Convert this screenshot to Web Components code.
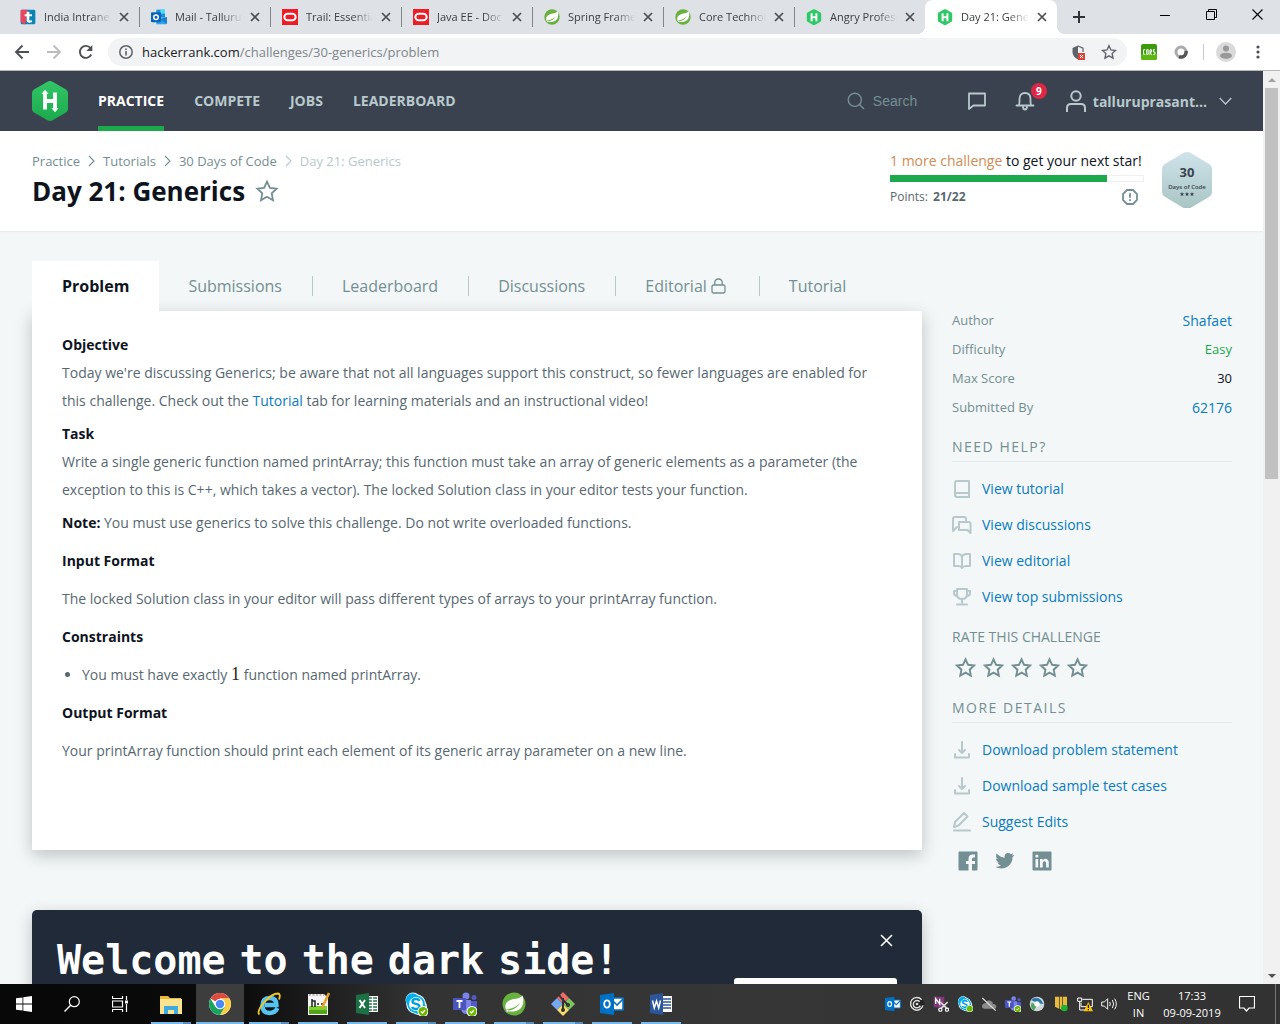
<!DOCTYPE html>
<html lang="en">
<head>
<meta charset="utf-8">
<title>Day 21: Generics | HackerRank</title>
<style>
html,body{margin:0;height:100%}
body{display:flex;flex-direction:column;height:100vh;overflow:hidden;font-family:"Open Sans",sans-serif;font-size:14px;color:#0e141e}
.viewport{flex:1;min-height:0;display:flex}
</style>
</head>
<body>
<tab-strip>
  <browser-tab icon="t">India Intrane</browser-tab>
  <browser-tab icon="mail">Mail - Talluru</browser-tab>
  <browser-tab icon="oracle">Trail: Essentia</browser-tab>
  <browser-tab icon="oracle">Java EE - Doc</browser-tab>
  <browser-tab icon="spring">Spring Frame</browser-tab>
  <browser-tab icon="spring">Core Technol</browser-tab>
  <browser-tab icon="hr" last>Angry Profess</browser-tab>
  <browser-tab icon="hr" active>Day 21: Gener</browser-tab>
</tab-strip>
<browser-toolbar></browser-toolbar>
<div class="viewport">
  <challenge-page></challenge-page>
  <scroll-bar></scroll-bar>
</div>
<task-bar></task-bar>

<script>
function define(name, css, html){
  const tpl = document.createElement('template');
  tpl.innerHTML = '<style>:host,*{box-sizing:border-box}button{font:inherit;color:inherit;background:none;border:0;padding:0;margin:0}a{text-decoration:none}svg{display:block;flex:none}' + css + '</style>' + (typeof html === 'string' ? html : '');
  customElements.define(name, class extends HTMLElement{
    constructor(){
      super();
      this.attachShadow({mode:'open'}).appendChild(tpl.content.cloneNode(true));
    }
    connectedCallback(){
      if(typeof html === 'function' && !this.ready){
        this.ready = true;
        const t = document.createElement('template');
        t.innerHTML = html(this);
        this.shadowRoot.appendChild(t.content.cloneNode(true));
      }
    }
  });
}

const STAR = 'M12 2.6l2.9 6.3 6.8.8-5 4.7 1.3 6.8-6-3.4-6 3.4 1.3-6.8-5-4.7 6.8-.8z';
const HEX = 'M18 0q1.500 0 3 .9l13 7.600q2 1.200 2 3.500v16q0 2.300-2 3.500l-13 7.600q-3 1.800-6 0l-13-7.600q-2-1.200-2-3.500v-16q0-2.300 2-3.500l13-7.600q1.500-.9 3-.9z';
const SPRING = '<circle cx="12" cy="12" r="11.500" fill="#68b13e"/><path d="M20.500 3.500c2 6 .5 12-4 14.500-4 2-8 1.600-11.500 1 6.500-1 11-4 13-8-3 3.500-7.500 5.800-14 6.500-2-4 .5-8.500 5-9.800 4.500-1.200 8.500-.7 11.500-4.200z" fill="#fff"/><circle cx="5.400" cy="18.800" r="1" fill="#fff"/>';
const CHROME = '<circle cx="12" cy="12" r="11" fill="#fff"/><path d="M12 12L2.500 6.500A11 11 0 0 1 21.500 6.500H12z" fill="#dd4b3e"/><path d="M21.500 6.500A11 11 0 0 1 12 23l4.800-8.300L12 6.500z" fill="#fdcd45"/><path d="M2.500 6.500l4.800 8.300 4.700 2.200 4.800-2.300L12 23A11 11 0 0 1 2.500 6.500z" fill="#1aa25f"/><circle cx="12" cy="12" r="5.200" fill="#fff"/><circle cx="12" cy="12" r="4.200" fill="#4a8af4"/>';
const FAV = {
  t:'<rect x="1" y="1" width="22" height="22" rx="2" fill="#0b84b5"/><path d="M2 1h9L8 23H6L1 19V2z" fill="#f0435c"/><path d="M10 4h4v4h4v3h-4v5q0 2 4 1v3q-8 2-8-3v-6H7V8h3z" fill="#fff"/>',
  mail:'<path d="M8 1h13v12H8z" fill="#1490df"/><path d="M14 1h7v6h-7z" fill="#50d9ff"/><path d="M8 12l8 5 8-5v9q0 2-2 2H8z" fill="#28a8ea"/><path d="M24 12v10L12 15z" fill="#1b7fd0"/><rect y="5" width="15" height="15" rx="1.500" fill="#0a64b8"/><circle cx="7.500" cy="12.500" r="3.400" fill="none" stroke="#fff" stroke-width="2.200"/>',
  oracle:'<path d="M0 0h24v24H0z" fill="#ee1c25"/><rect x="3.500" y="7" width="17" height="10" rx="5" fill="none" stroke="#fff" stroke-width="3"/>',
  spring:SPRING,
  hr:'<g transform="translate(1.200 .2) scale(.6)"><path d="'+HEX+'" fill="#2ec866"/><path d="M12 10v20M24 10v20M12 20h12" stroke="#fff" stroke-width="5"/></g>'
};
const svg = (s, body, vb='0 0 24 24', h=s) => `<svg width="${s}" height="${h}" viewBox="${vb}" fill="none" aria-hidden="true">${body}</svg>`;
const CROSS = c => svg(10, `<path d="M1 1l8 8M9 1l-8 8" stroke="${c}" stroke-width="1.700"/>`, '0 0 10 10');

define('browser-tab', `
:host{display:flex;flex:0 1 131px;min-width:0;height:34px;padding:0 10px 0 12px;align-items:center;gap:8px;position:relative;color:#3c4043;font-size:11px}
:host(:not([active]):not([last]))::after{content:"";position:absolute;right:-1px;top:7px;height:20px;width:1px;background:#80868b}
:host([active]){background:#fff;border-radius:8px 8px 0 0;flex-basis:132px}
:host([active])::before,:host([active])::after{content:"";position:absolute;bottom:0;width:8px;height:8px}
:host([active])::before{left:-8px;background:radial-gradient(circle at 0 0,#dee1e6 8px,#fff 8px)}
:host([active])::after{right:-8px;background:radial-gradient(circle at 100% 0,#dee1e6 8px,#fff 8px)}
.t{flex:1;min-width:0;white-space:nowrap;overflow:hidden;line-height:20px;-webkit-mask-image:linear-gradient(90deg,#000 70%,transparent);mask-image:linear-gradient(90deg,#000 70%,transparent)}
`, el => svg(16, FAV[el.getAttribute('icon')]) + '<span class="t"><slot></slot></span><button aria-label="Close tab">' + CROSS('#4a4d51') + '</button>');

define('tab-strip', `
:host{display:flex;flex:none;height:34px;background:#dee1e6;padding-left:8px;align-items:stretch}
.new{width:44px;display:flex;align-items:center;justify-content:center}
.win{margin-left:auto;display:flex;height:29px}
.win button{width:46px;display:flex;align-items:center;justify-content:center}
`, `<slot></slot><button class="new" aria-label="New tab">${svg(12,'<path d="M6 0v12M0 6h12" stroke="#303236" stroke-width="2"/>','0 0 12 12')}</button>
<div class="win"><button aria-label="Minimize">${svg(10,'<path d="M0 5.500h10" stroke="#000"/>','0 0 10 10')}</button><button aria-label="Restore">${svg(11,'<path d="M.5 2.500h8v8h-8zM2.500 2.500v-2h8v8h-2" stroke="#000"/>','0 0 11 11')}</button><button aria-label="Close">${svg(11,'<path d="M.5.5l10 10M10.500.5l-10 10" stroke="#000" stroke-width="1.100"/>','0 0 11 11')}</button></div>`);

define('browser-toolbar', `
:host{display:flex;flex:none;height:37px;padding:0 6px 0 6px;background:#fff;border-bottom:1px solid #b6b6b6;align-items:center}
.b{width:32px;height:28px;display:flex;align-items:center;justify-content:center}
.omni{flex:1;min-width:0;height:28px;margin:0 6px 0 6px;border-radius:14px;background:#f1f3f4;display:flex;align-items:center;padding:0 10px}
.url{flex:1;margin-left:8px;font-size:13px;line-height:20px;color:#80868b;white-space:nowrap}
.url b{font-weight:400;color:#202124}
.omni button{width:16px;margin-left:15px}
.sep{width:1px;height:16px;background:#c8cacd;margin:0 6px}
`, `<button class="b" aria-label="Back">${svg(16,'<path d="M15 8H2M8.500 1.500L2 8l6.500 6.500" stroke="#4d5156" stroke-width="1.900"/>','0 0 16 16')}</button>
<button class="b" aria-label="Forward">${svg(16,'<path d="M1 8h13M7.500 1.500L14 8l-6.500 6.500" stroke="#babcbe" stroke-width="1.900"/>','0 0 16 16')}</button>
<button class="b" aria-label="Reload">${svg(16,'<path d="M13.300 10.500A6 6 0 1 1 12.500 4" stroke="#4d5156" stroke-width="1.900"/><path d="M14.300 1v6h-6z" fill="#4d5156"/>','0 0 16 16')}</button>
<div class="omni">${svg(16,'<circle cx="8" cy="8" r="6.200" stroke="#5f6368" stroke-width="1.500"/><path d="M8 7v4.500M8 4.500v1.500" stroke="#5f6368" stroke-width="1.600"/>','0 0 16 16')}
<span class="url"><b>hackerrank.com</b>/challenges/30-generics/problem</span>
<button aria-label="Blocked content">${svg(16,'<path d="M8 1.500L2.500 4v4q0 5 5.500 7.500z" fill="#5f6368"/><path d="M8 2l5 2.200V8" stroke="#5f6368" stroke-width="1.200"/><path d="M8 9h7v7H8z" fill="#db4437"/><path d="M10 11l3 3M13 11l-3 3" stroke="#fff"/>','0 0 16 16')}</button>
<button aria-label="Bookmark">${svg(16,`<path d="${STAR}" stroke="#5f6368" stroke-width="2.100"/>`)}</button></div>
<button class="b" aria-label="CORS">${svg(16,'<rect width="16" height="16" rx="2" fill="#3a9a0c"/><path d="M0 10h16v4q0 2-2 2H2q-2 0-2-2z" fill="#5cb811"/><path d="M4.200 5.700H2.600v4.600h1.600M5.700 5.700h1.500v4.600H5.700zM9 10.800V5.700h1.500v2.400H9l1.700 2.700M14 5.700h-1.600V8H14v2.300h-1.800" stroke="#fff"/>','0 0 16 16')}</button>
<button class="b" aria-label="Extension">${svg(14,'<circle cx="7" cy="7" r="5" stroke="#aaa" stroke-width="3"/><path d="M12 6A5 5 0 0 1 5 11.600" stroke="#555" stroke-width="3.400"/>','0 0 14 14')}</button>
<span class="sep"></span>
<button class="b" aria-label="Profile">${svg(20,'<circle cx="10" cy="10" r="10" fill="#dadada"/><circle cx="10" cy="6.500" r="3" fill="#999"/><ellipse cx="10" cy="13.700" rx="6" ry="3" fill="#999"/>','0 0 20 20')}</button>
<button class="b" aria-label="Menu">${svg(4,'<circle cx="2" cy="2" r="1.600" fill="#4d5156"/><circle cx="2" cy="7" r="1.600" fill="#4d5156"/><circle cx="2" cy="12" r="1.600" fill="#4d5156"/>','0 0 4 14',14)}</button>`);

define('scroll-bar', `
:host{display:flex;flex-direction:column;flex:none;width:17px;background:#f1f1f1;align-items:stretch}
button{height:17px;display:flex;align-items:center;justify-content:center}
.track{flex:1;padding:0 2px}
.thumb{height:44.5%;background:#c1c1c1}
`, `<button aria-label="Scroll up">${svg(8,'<path d="M0 4l4-4 4 4z" fill="#a3a3a3"/>','0 0 8 4',4)}</button><div class="track"><div class="thumb"></div></div><button aria-label="Scroll down">${svg(8,'<path d="M0 0l4 4 4-4z" fill="#505050"/>','0 0 8 4',4)}</button>`);

define('site-nav', `
:host{display:flex;height:60px;background:#3b424f;padding:0 31px 0 32px;align-items:center;color:#b7c9cc;font-weight:700;font-size:14px}
nav{display:flex;gap:30px;margin-left:30px;height:60px}
nav a{color:#b7c9cc;line-height:60px;height:60px}
nav a.on{color:#fff;border-bottom:5px solid #1ba94c}
.search{margin-left:auto;display:flex;align-items:center;gap:8px}
input{width:84px;background:none;border:0;outline:0;padding:0;font:14px/20px "Liberation Sans",sans-serif;color:#fff}
input::placeholder{color:#738f93;opacity:1}
.i{width:20px;height:24px;display:flex;align-items:center;justify-content:center;position:relative;margin-left:10px}
.bell{margin-left:28px}
.n{position:absolute;left:16px;top:-6px;width:16px;height:16px;border-radius:8px;background:#dc2844;color:#fff;font-size:10px;line-height:16px;text-align:center}
.user{display:flex;align-items:center;margin-left:30px;gap:6px}
.user svg:last-child{margin-left:6px}
`, `<a href="#" aria-label="HackerRank">${svg(36,`<defs><linearGradient id="g" x1="0" y1="0" x2="0" y2="1"><stop stop-color="#32c766"/><stop offset="1" stop-color="#1ba94c"/></linearGradient></defs><path d="${HEX}" fill="url(#g)"/><path d="M13 12v16.500M23 11.500V28M13 20h10" stroke="#fff" stroke-width="3.800"/><path d="M9.500 12.700l3.500-4 3.500 4zM19.500 27.300l3.500 4 3.500-4z" fill="#fff"/>`,'0 0 36 40',40)}</a>
<nav><a href="#" class="on">PRACTICE</a><a href="#">COMPETE</a><a href="#">JOBS</a><a href="#">LEADERBOARD</a></nav>
<label class="search">${svg(18,'<circle cx="7.800" cy="7.800" r="6.600" stroke="#738f93" stroke-width="1.400"/><path d="M12.500 12.500l4.500 4.500" stroke="#738f93" stroke-width="1.400"/>','0 0 18 18')}<input type="search" placeholder="Search" aria-label="Search"></label>
<button class="i" aria-label="Messages">${svg(18,'<path d="M1 1.500h16v12H5.500L1 17z" stroke="#b7c9cc" stroke-width="1.800" stroke-linejoin="round"/>','0 0 18 18')}</button>
<button class="i bell" aria-label="Notifications">${svg(20,'<path d="M1.500 14.500h17M3.500 14.500q1-1 1-4V8q0-6 5.500-6t5.500 6v2.500q0 3 1 4M8 15.500q0 3 2 3t2-3" stroke="#b7c9cc" stroke-width="1.800" stroke-linecap="round"/>','0 0 20 20')}<span class="n">9</span></button>
<button class="user">${svg(22,'<circle cx="11" cy="6" r="4.700" stroke="#b7c9cc" stroke-width="2"/><path d="M2 22v-4q0-4 4-4h10q4 0 4 4v4" stroke="#b7c9cc" stroke-width="2"/>','0 0 22 23',23)}<span>talluruprasant...</span>${svg(13,'<path d="M.7 1l5.800 6 5.800-6" stroke="#b7c9cc" stroke-width="1.300"/>','0 0 13 8',8)}</button>`);

const CHEV = c => svg(7, `<path d="M1 1l5 5-5 5" stroke="${c}" stroke-width="1.100"/>`, '0 0 7 12', 12);
define('challenge-header', `
:host{display:flex;height:100px;background:#fff;padding:0 51px 0 32px;justify-content:space-between;box-shadow:0 1px 2px rgba(0,0,0,.06)}
.crumbs{display:flex;align-items:center;gap:8px;margin-top:20px;font-size:13px;line-height:20px}
.crumbs a{color:#738f93}.crumbs span{color:#b7c9cc}
.title{display:flex;align-items:center;gap:10px}
h1{margin:0;font-size:26px;line-height:40px;font-weight:700}
.prog{display:flex;gap:18px}
.box{width:254px;padding-top:20px}
.box p{margin:0;line-height:20px;white-space:nowrap}
.box p i{font-style:normal;color:#d08c54}
.bar{height:7px;border:1px solid #f0f0f0;margin:4px 0 5px;display:flex}
.bar div{width:86%;background:#1ba94c;margin:-1px}
.pts{display:flex;align-items:center;justify-content:space-between;font-size:12px;line-height:20px;color:#576871;padding-right:6px}
.pts b{margin-left:2px;font-weight:700}
.badge{margin-top:21px}
`, `<div><div class="crumbs"><a href="#">Practice</a>${CHEV('#738f93')}<a href="#">Tutorials</a>${CHEV('#738f93')}<a href="#">30 Days of Code</a>${CHEV('#b7c9cc')}<span>Day 21: Generics</span></div>
<div class="title"><h1>Day 21: Generics</h1><button aria-label="Bookmark challenge">${svg(24,`<path d="${STAR}" stroke="#738f93" stroke-width="1.800"/>`)}</button></div></div>
<div class="prog"><div class="box"><p><i>1 more challenge</i> to get your next star!</p><div class="bar"><div></div></div>
<div class="pts"><span>Points: <b>21/22</b></span>${svg(16,'<path d="M5 1h6l4 4v6l-4 4H5l-4-4V5z" stroke="#738f93" stroke-width="1.800"/><path d="M8 4.300v4.400M8 10.200v1.700" stroke="#738f93" stroke-width="1.800"/>','0 0 16 16')}</div></div>
<svg class="badge" width="50" height="56" viewBox="0 0 50 56"><defs><linearGradient id="b" x1="0" y1="0" x2="0" y2="1"><stop stop-color="#cfe3eb"/><stop offset="1" stop-color="#a9c5c3"/></linearGradient></defs><path transform="scale(1.389 1.420)" d="${HEX}" fill="url(#b)"/><text x="25" y="25" text-anchor="middle" font-size="13" font-weight="700" fill="#39424e">30</text><text x="25" y="37" text-anchor="middle" font-size="6" font-weight="600" fill="#39424e">Days of Code</text><g fill="#39424e"><path id="s" d="M20 40l.7 1.400 1.500.1-1.200 1 .4 1.500-1.400-.8-1.400.8.4-1.500-1.200-1 1.500-.1z"/><use href="#s" x="5"/><use href="#s" x="10"/></g></svg></div>`);

define('challenge-tabs', `
:host{display:flex;height:50px;align-items:center;font-size:16px}
a{color:#738f93;line-height:20px;padding:0 30px 0 29px;display:flex;align-items:center;gap:4px;border-right:1px solid #b7c9cc;white-space:nowrap}
a svg{margin-right:3px}
a:last-child,a.on{border:0}
a.on{background:#fff;color:#0e141e;font-weight:700;line-height:50px;padding:0 30px;position:relative}
`, `<a href="#" class="on">Problem</a><a href="#">Submissions</a><a href="#">Leaderboard</a><a href="#">Discussions</a><a href="#">Editorial${svg(15,'<rect x="1" y="7" width="13" height="8" rx="1.500" stroke="#738f93" stroke-width="1.300"/><path d="M3.800 7V4.500q0-3.500 3.700-3.500t3.700 3.500V7" stroke="#738f93" stroke-width="1.300"/>','0 0 15 16',16)}</a><a href="#">Tutorial</a>`);

define('problem-card', `
:host{display:block;background:#fff;padding:20px 30px 85px;box-shadow:0 5px 16px rgba(0,0,0,.22);line-height:28px;color:#576871}
p{margin:0}
p+p{margin-top:5px}
h3{font-size:14px;line-height:28px;margin:10px 0;font-weight:700;color:#0e141e}
b{font-weight:700;color:#0e141e}
a{color:#097bbf}
ul{margin:0;padding-left:20px}
.m{font:18px/20px "Liberation Serif",serif;color:#222}
`, `<p><b>Objective</b><br>Today we're discussing Generics; be aware that not all languages support this construct, so fewer languages are enabled for this challenge. Check out the <a href="#">Tutorial</a> tab for learning materials and an instructional video!</p>
<p><b>Task</b><br>Write a single generic function named printArray; this function must take an array of generic elements as a parameter (the exception to this is C++, which takes a vector). The locked Solution class in your editor tests your function.</p>
<p><b>Note:</b> You must use generics to solve this challenge. Do not write overloaded functions.</p>
<h3>Input Format</h3><p>The locked Solution class in your editor will pass different types of arrays to your printArray function.</p>
<h3>Constraints</h3><ul><li>You must have exactly <span class="m">1</span> function named printArray.</li></ul>
<h3>Output Format</h3><p>Your printArray function should print each element of its generic array parameter on a new line.</p>`);

define('dark-banner', `
:host{display:flex;margin-top:60px;height:220px;background:#202a38;border-radius:5px;padding:20px 25px 0;justify-content:space-between;color:#fff;box-shadow:0 5px 16px rgba(0,0,0,.22)}
h2{margin:0;font:700 40px/60px "DejaVu Sans Mono",monospace;white-space:nowrap}
h2 span{font-family:"DejaVu Sans",sans-serif}
.r{display:flex;flex-direction:column;align-items:flex-end;width:163px}
.r button{margin:4px 4px 0 0}
.cta{align-self:stretch;height:48px;margin-top:31px;background:#fff;border-radius:3px}
`, `<h2>Welcome<span> </span>to<span> </span>the<span> </span>dark<span> </span>side!</h2><div class="r"><button aria-label="Dismiss">${svg(13,'<path d="M1 1l11 11M12 1L1 12" stroke="#fff" stroke-width="1.600"/>','0 0 13 13')}</button><div class="cta"></div></div>`);

const SIDE = {
  book:'<path d="M5 2h12v16H5q-2 0-2-2V4q0-2 2-2zM3 15.500q0-1.500 2-1.500h12"/>',
  chat:'<path d="M14 6V4q0-2-2-2H3Q1 2 1 4v12l4-4M7 7h10q1.500 0 1.500 1.500V18l-3-3H7z"/>',
  open:'<path d="M10 5Q8 3 6 3H2v12h4q3 0 4 2 1-2 4-2h4V3h-4q-2 0-4 2zM10 5v12"/>',
  cup:'<path d="M5 2h10v5q0 5-5 5T5 7zM5 4H2v2q0 3 3.500 3M15 4h3v2q0 3-3.500 3M10 12v4M5 17.500h10"/>',
  down:'<path d="M10 2v11M7 10l3 3 3-3M3 14v3.500h14V14"/>',
  edit:'<path d="M2 15l1-5 9-9 3.500 3.500-9 9zM2 18.500h16"/>'
};
define('side-link', `
:host{display:flex;align-items:center;gap:10px;height:36px}
svg{overflow:visible}
a{color:#097bbf;line-height:20px}
`, el => svg(20, `<g stroke="#b7c9cc" stroke-width="2" stroke-linejoin="round" stroke-linecap="round">${SIDE[el.getAttribute('icon')]}</g>`, '0 0 20 20') + '<a href="#"><slot></slot></a>');

define('challenge-sidebar', `
:host{display:block;flex:none;width:280px;padding-top:45px;color:#738f93}
dl{margin:0}
dl div{display:flex;justify-content:space-between;line-height:29px;height:29px;font-size:13px}
dd{margin:0;color:#0e141e}
dd a{color:#097bbf;font-size:14px}
.easy{color:#1ba94c}
h4{margin:0;font-size:14px;font-weight:400;line-height:20px}
h4.u{letter-spacing:1.5px;border-bottom:1px solid #e1eaea;padding-bottom:4px}
.help{margin-top:15px;padding-bottom:12px}
.u+side-link{margin-top:9px}
.stars{display:flex;gap:4px;margin:9px 0 18px 2px}
.stars button{height:24px;width:24px;display:flex;align-items:center;justify-content:center}
.soc{display:flex;gap:17px;margin:11px 0 0 6px}
`, `<dl><div><dt>Author</dt><dd><a href="#">Shafaet</a></dd></div><div><dt>Difficulty</dt><dd class="easy">Easy</dd></div><div><dt>Max Score</dt><dd>30</dd></div><div><dt>Submitted By</dt><dd><a href="#">62176</a></dd></div></dl>
<div class="help"><h4 class="u">NEED HELP?</h4><side-link icon="book">View tutorial</side-link><side-link icon="chat">View discussions</side-link><side-link icon="open">View editorial</side-link><side-link icon="cup">View top submissions</side-link></div>
<h4>RATE THIS CHALLENGE</h4><div class="stars">${[1,2,3,4,5].map(n=>`<button aria-label="Rate ${n}">${svg(22,`<path d="${STAR}" stroke="#738f93" stroke-width="2.200"/>`,'0 0 25 25')}</button>`).join('')}</div>
<h4 class="u">MORE DETAILS</h4><side-link icon="down">Download problem statement</side-link><side-link icon="down">Download sample test cases</side-link><side-link icon="edit">Suggest Edits</side-link>
<div class="soc"><a href="#" aria-label="Facebook">${svg(20,'<rect x=".5" y=".5" width="19" height="19" rx="1" fill="#738f93"/><path d="M14 20v-7h3v-3h-3V8q0-1.500 1.500-1.500H17v-3h-2.500Q10.500 3.500 10.500 8v2H8v3h2.500v7z" fill="#f3f7f7"/>','0 0 20 20')}</a><a href="#" aria-label="Twitter">${svg(20,'<path d="M19.500 4l-2 2.200q0 5-3.500 8.300c-4 3.800-9.800 3.500-13.500 1.300q3.500.2 5.500-1.600-2.800-.3-3.600-2.800h1.700Q1.200 10.500 1 7.500l1.700.5Q0 5.500 1.700 2.500q3.500 4 8 4.200Q9 3.500 11.500 2.300q2.600-1 4.500.9l2.500-.9-1.600 2.200z" fill="#738f93"/>','0 0 20 20')}</a><a href="#" aria-label="LinkedIn">${svg(20,'<rect x=".5" y=".5" width="19" height="19" rx="1" fill="#738f93"/><path d="M3.500 8h2.700v8.500H3.500zM8 8h2.600v1.200q3-2.600 5.400-.2.8 1 .8 2.700v4.800h-2.700v-4.300q0-2-1.600-2-1.800 0-1.800 2v4.300H8z" fill="#f3f7f7"/><circle cx="4.850" cy="5" r="1.600" fill="#f3f7f7"/>','0 0 20 20')}</a></div>`);

define('challenge-page', `
:host{display:block;flex:1;min-width:0;overflow:hidden;background:#f3f7f7}
main{display:flex;gap:30px;padding:30px 31px 0 32px}
.l{flex:1;min-width:0}
`, `<site-nav></site-nav><challenge-header></challenge-header><main><div class="l"><challenge-tabs></challenge-tabs><problem-card></problem-card><dark-banner></dark-banner></div><challenge-sidebar></challenge-sidebar></main>`);

const SKYPE = '<circle cx="9" cy="8" r="7.500" fill="#fff"/><circle cx="15" cy="15" r="8" fill="#fff"/><circle cx="12" cy="12" r="9.800" fill="#fff"/><circle cx="8.500" cy="8" r="6.700" fill="#00aff0"/><circle cx="15" cy="15.500" r="6.700" fill="#00aff0"/><circle cx="12" cy="12" r="8.800" fill="#00aff0"/><circle cx="12" cy="12" r="7" fill="#fff"/><path d="M15.500 8.800Q14.500 7 12 7q-3.500 0-3.500 2.400 0 1.800 3.500 2.500t3.500 2.700Q15.500 17 12 17q-3 0-4-2" stroke="#00a0e0" stroke-width="2.400"/>';
const OK = '<circle cx="19" cy="19.500" r="5.500" fill="#fff"/><circle cx="19" cy="19.500" r="4.500" fill="#6bb700"/><path d="M17 19.500l1.500 1.500 2.500-3" stroke="#fff" stroke-width="1.200"/>';
const TEAMS = '<circle cx="13" cy="4" r="3.500" fill="#7b83eb"/><circle cx="21" cy="5.500" r="2.500" fill="#5059c9"/><path d="M9 8h9v9q0 5-5 5-4 0-5-5z" fill="#7b83eb"/><path d="M18 9h6v7q0 3-3 3h-3z" fill="#5059c9"/><rect y="6" width="13" height="12" rx="1" fill="#4b53bc"/><path d="M3.500 9h6M6.500 9v7" stroke="#fff" stroke-width="1.800"/>';
const OUT = '<path d="M11 6h12v12H11z" fill="#fff" stroke="#0072c6" stroke-width="1.500"/><path d="M12 8l5 5 6-6" stroke="#0072c6" stroke-width="1.600"/><path d="M0 3l14-2v22L0 21z" fill="#0072c6"/><ellipse cx="7" cy="12" rx="2.800" ry="3.700" stroke="#fff" stroke-width="1.800"/>';
const APPS = [
 ['File Explorer','<path d="M1 4h8l2 2h11v15H1z" fill="#e8b93c"/><path d="M1 7h22v15H1z" fill="#fce38f"/><path d="M5 14h14v8h-4v-4H9v4H5z" fill="#3fa9e0"/>','w2'],
 ['Chrome',CHROME,'act'],
 ['Internet Explorer','<path d="M20.500 16Q18 21 12.500 21 5.500 21 5.500 13.500T12.500 6q7 0 7 7H8" stroke="#55c4f2" stroke-width="4.400"/><path d="M2.500 22.500C-2.500 19 13 1.500 21 1.500q3 .5 1 6" stroke="#f3c622" stroke-width="1.800"/>','w2'],
 ['Notepad++','<path d="M2 2h16l4 4v17H2z" fill="#f5f5f5"/><path d="M3 14h18v8H3z" fill="#7fcf2e"/><path d="M3 18h18v4H3z" fill="#55a31a"/><path d="M6 7v8M6 9h3v6M11 12h2M15 12h3" stroke="#222" stroke-width="1.500"/><path d="M23 1l-7 15" stroke="#e5a62c" stroke-width="2.600"/><path d="M3 3h15" stroke="#777" stroke-dasharray="2 1.500"/>',''],
 ['Excel','<path d="M12 4h11v16H12z" fill="#fff"/><path d="M14 6h8M14 9h8M14 12h8M14 15h8M14 18h8" stroke="#217346" stroke-width="1.500"/><path d="M17.500 4v16" stroke="#fff" stroke-width="1.200"/><path d="M1 3l13-2v22L1 21z" fill="#1d7044"/><path d="M4.500 8l5.500 8M10 8l-5.500 8" stroke="#fff" stroke-width="1.900"/>',''],
 ['Skype',SKYPE+OK,'w2'],
 ['Teams',TEAMS+OK,''],
 ['Spring Tool Suite',SPRING,'w2'],
 ['Git','<path d="M12 0l6 6-6 6-6-6z" fill="#f0696a"/><path d="M18 6l6 6-6 6-6-6z" fill="#7cc55f"/><path d="M6 6l6 6-6 6-6-6z" fill="#74a8ef"/><path d="M12 12l6 6-6 6-6-6z" fill="#f8dc6a"/><path d="M12 6v12M8 3l4 5 5 5" stroke="#333" stroke-width="2"/><circle cx="12" cy="18" r="2" fill="#333"/><circle cx="17" cy="13" r="2" fill="#333"/>','w2'],
 ['Outlook',OUT,''],
 ['Word','<path d="M12 4h11v16H12z" fill="#fff"/><path d="M14 7h8M14 10h8M14 13h8M14 16h8" stroke="#2b579a" stroke-width="1.300"/><path d="M1 3l13-2v22L1 21z" fill="#2b579a"/><path d="M3.500 8.500L5.300 16l2.200-7 2.200 7 1.800-7.500" stroke="#fff" stroke-width="1.500"/>','']
];
const TRAY = [
 OUT,
 '<circle cx="12" cy="12" r="11" fill="#222"/><path d="M21 14a9.500 9.500 0 1 1-2-8.500M17 14.500a5.500 5.500 0 1 1-1-6" stroke="#ddd" stroke-width="2.200"/><circle cx="12" cy="12" r="2" fill="#ddd"/>',
 '<path d="M1 1h16v16H1z" fill="#80397b"/><path d="M4 12V4l6 8V4" stroke="#fff" stroke-width="2"/><path d="M11 9l10 10M22 9L12 19" stroke="#ddd" stroke-width="2.400"/><circle cx="11" cy="20.500" r="2.400" stroke="#fff" stroke-width="1.800"/><circle cx="21" cy="20.500" r="2.400" stroke="#fff" stroke-width="1.800"/>',
 SKYPE+'<circle cx="19" cy="19" r="5" fill="#6bb700" stroke="#fff"/>',
 '<path d="M5 19q-5-1-3-6 2-3 5-2 2-6 7-4 4 1 4 5 5 0 5 4 0 3-3 3z" fill="#8b8b8b"/><path d="M2 3l20 19" stroke="#ddd" stroke-width="1.800"/>',
 TEAMS+OK,
 '<circle cx="12" cy="12" r="11" fill="#cfd8dc"/><path d="M3 6q8-7 15 0l4 6-8-1z" fill="#2d77ad"/><path d="M7 22q-6-5-3-12l8 4z" fill="#4fa35a"/><circle cx="12" cy="12" r="4" fill="#fff"/>',
 '<path d="M3 1h6v18l-6-3zM10 1h4v20l-4-2zM15 1h6v15l-6 4z" fill="#e7bb3d"/><circle cx="17" cy="18" r="5" fill="#1db233"/>',
 '<path d="M1 3h6v5H1zM8 5h15v11H6v-6M4 8v13h8" stroke="#fff" stroke-width="1.500"/><path d="M17 9l7 14H10z" fill="#ffc20e"/><path d="M17 13v5M17 19.500v2" stroke="#000" stroke-width="1.600"/>',
 '<path d="M1 9h4l5-5v16l-5-5H1zM13 9q2 3 0 6M17 6q4 6 0 12M20.500 4q5 8 0 16" stroke="#fff" stroke-width="1.400"/>'
];
define('task-bar', `
:host{display:flex;flex:none;height:40px;background:linear-gradient(90deg,#080808 0,#0a0a0a 18%,#333 33%,#363636 60%,#323232);color:#fff;font-size:12px}
button{display:flex;align-items:center;justify-content:center;height:40px}
.s{width:48px}
.apps{display:flex;gap:1px;margin-left:3px}
.apps button{width:48px;position:relative}
.apps button::after{content:"";position:absolute;left:4px;right:4px;bottom:0;height:2px;background:#76b9ed}
.apps .w2::after{background:linear-gradient(90deg,#76b9ed 32px,#5a8db8 32px)}
.apps .act{background:#3d3d3d}.apps .act::after{left:0;right:0}
.tray{display:flex;gap:8px;margin-left:auto}
.txt{flex-direction:column;line-height:17px;font-size:11px}
.lang{width:43px}.clk{width:64px}
.note{width:46px;margin-right:5px}
.edge{width:5px;border-left:1px solid #777}
`, `<button class="s" aria-label="Start">${svg(16,'<path d="M0 2.300l6.500-.9v6.200H0zM7.300 1.200L16 0v7.600H7.300zM0 8.400h6.500v6.200L0 13.700zM7.300 8.400H16V16l-8.700-1.200z" fill="#fff"/>','0 0 16 16')}</button>
<button class="s" aria-label="Search">${svg(16,'<circle cx="10.300" cy="5.700" r="5" stroke="#fff" stroke-width="1.200"/><path d="M6.700 9.300L.5 15.500" stroke="#fff" stroke-width="1.400"/>','0 0 16 16')}</button>
<button class="s" aria-label="Task view">${svg(16,'<path d="M.5 0v2.500h10V0M.5 16v-2.500h10V16M.5 5h10v6H.5zM14.500 0v4M14.500 8v8" stroke="#fff" stroke-width="1.200"/><path d="M13 4.500h3v3h-3z" fill="#fff"/>','0 0 16 16')}</button>
<div class="apps">${APPS.map(a=>`<button class="${a[2]}" aria-label="${a[0]}">${svg(24,a[1])}</button>`).join('')}</div>
<div class="tray">${TRAY.map((t,i)=>`<button aria-label="Tray item ${i+1}">${svg(16,t)}</button>`).join('')}</div>
<button class="txt lang"><span>ENG</span><span>IN</span></button><button class="txt clk"><span>17:33</span><span>09-09-2019</span></button>
<button class="note" aria-label="Notifications">${svg(16,'<path d="M.5.500h15v11.500h-5.500l-2.500 3-2.500-3H.5z" stroke="#fff" stroke-width="1.200"/>','0 0 16 16')}</button><span class="edge"></span>`);
</script>
</body>
</html>
